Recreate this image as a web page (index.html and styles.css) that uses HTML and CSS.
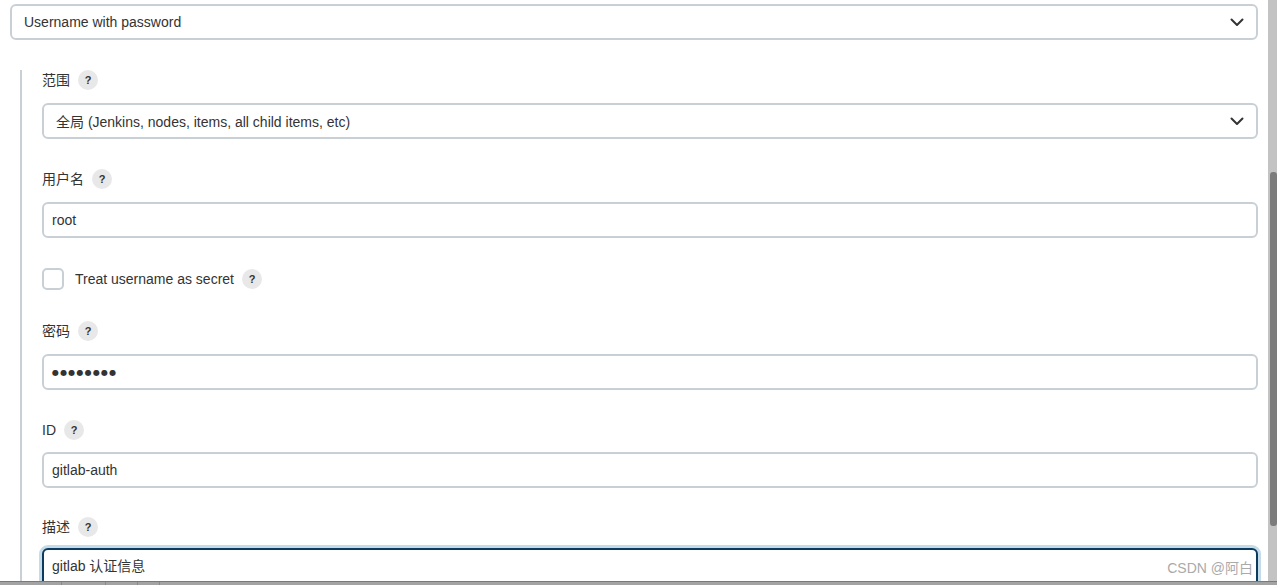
FILE: index.html
```html
<!DOCTYPE html>
<html lang="zh-CN">
<head>
    <meta charset="UTF-8">
    <title>Jenkins 凭据</title>
    <link rel="stylesheet" href="styles.css">
</head>
<body>
    <div class="window">
        <div class="page">
            <div class="select top-select">
                <span>Username with password</span>
                <svg class="chevron" width="14" height="9" viewBox="0 0 14 9"><path d="M1.5 1.5 7 7l5.5-5.5" fill="none" stroke="#333" stroke-width="2" stroke-linecap="round" stroke-linejoin="round"/></svg>
            </div>
            <div class="group">
                <div class="field">
                    <div class="label">范围 <span class="help">?</span></div>
                    <div class="select">
                        <span>全局 (Jenkins, nodes, items, all child items, etc)</span>
                        <svg class="chevron" width="14" height="9" viewBox="0 0 14 9"><path d="M1.5 1.5 7 7l5.5-5.5" fill="none" stroke="#333" stroke-width="2" stroke-linecap="round" stroke-linejoin="round"/></svg>
                    </div>
                </div>
                <div class="field">
                    <div class="label">用户名 <span class="help">?</span></div>
                    <div class="input">root</div>
                </div>
                <div class="field check-row">
                    <span class="checkbox"></span>
                    <span class="check-label">Treat username as secret</span>
                    <span class="help">?</span>
                </div>
                <div class="field">
                    <div class="label">密码 <span class="help">?</span></div>
                    <div class="input dots">●●●●●●●●</div>
                </div>
                <div class="field field-id">
                    <div class="label">ID <span class="help">?</span></div>
                    <div class="input">gitlab-auth</div>
                </div>
                <div class="field">
                    <div class="label">描述 <span class="help">?</span></div>
                    <div class="input textarea">gitlab 认证信息</div>
                </div>
            </div>
            <div class="watermark">CSDN @阿白</div>
        </div>
        <div class="scrollbar"><div class="thumb"></div></div>
    </div>
    <div class="bottom-bar">
        <span class="cell c1"></span><span class="cell c2"></span><span class="cell c3"></span><span class="cell c4"></span>
    </div>
</body>
</html>
```

FILE: styles.css
```css
html, body {
    margin: 0;
    padding: 0;
    height: 585px;
    overflow: hidden;
    background: #ffffff;
}
body {
    font-family: 'Liberation Sans', Arial, 'Noto Sans CJK SC', sans-serif;
    font-size: 14px;
    color: #333;
    display: flex;
    flex-direction: column;
}
.window {
    display: flex;
    height: 582px;
    overflow: hidden;
}
.page {
    flex-grow: 1;
    padding: 4px 10px 0 10px;
    position: relative;
    overflow: hidden;
}
.select, .input {
    box-sizing: border-box;
    height: 36px;
    border: 2px solid #c8d0d6;
    border-radius: 6px;
    display: flex;
    align-items: center;
    background: #fff;
}
.select {
    padding: 0 12px;
    justify-content: space-between;
}
.input {
    padding: 0 8px;
}
.group {
    margin: 30px 0 0 10px;
    border-left: 2px solid #c8d0d6;
    padding-left: 20px;
    height: 600px;
}
.field {
    margin-bottom: 30px;
}
.label {
    display: flex;
    align-items: center;
    height: 20px;
    line-height: 18px;
    margin-bottom: 13px;
}
.help {
    display: inline-flex;
    align-items: center;
    justify-content: center;
    width: 20px;
    height: 20px;
    border-radius: 50%;
    background: #e8e8e8;
    color: #333;
    font-size: 11px;
    font-weight: bold;
    margin-left: 8px;
}
.check-row {
    display: flex;
    align-items: center;
    height: 22px;
    margin-bottom: 31px;
}
.checkbox {
    box-sizing: border-box;
    width: 22px;
    height: 22px;
    border: 2px solid #c8d0d6;
    border-radius: 5px;
    margin-right: 11px;
}
.dots {
    font-family: 'DejaVu Sans', sans-serif;
    font-size: 8px;
    letter-spacing: 1.2px;
    color: #333;
}
.field-id {
    margin-bottom: 29px;
}
.field-id .label {
    margin-bottom: 12px;
}
.textarea {
    height: 60px;
    align-items: flex-start;
    padding-top: 7px;
    line-height: 18px;
    margin-top: -2px;
    border-color: #0d3b5e;
    box-shadow: 0 0 0 3px #c4dbea;
}
.watermark {
    position: absolute;
    right: 15px;
    bottom: 4px;
    color: #aaa;
    font-size: 14px;
}
.scrollbar {
    width: 9px;
    background: #c3c3c3;
    position: relative;
}
.thumb {
    position: absolute;
    left: 2px;
    right: 0;
    top: 172px;
    height: 354px;
    background: #7c7c7c;
    border-radius: 3px;
}
.bottom-bar {
    height: 3px;
    border-top: 1px solid #7a7a7a;
    background: #a3a3a3;
    display: flex;
}
.cell {
    border-right: 1px solid #8a8a8a;
}
.c1 { width: 61px; }
.c2 { width: 43px; }
.c3 { width: 31px; }
.c4 { width: 21px; }
```
